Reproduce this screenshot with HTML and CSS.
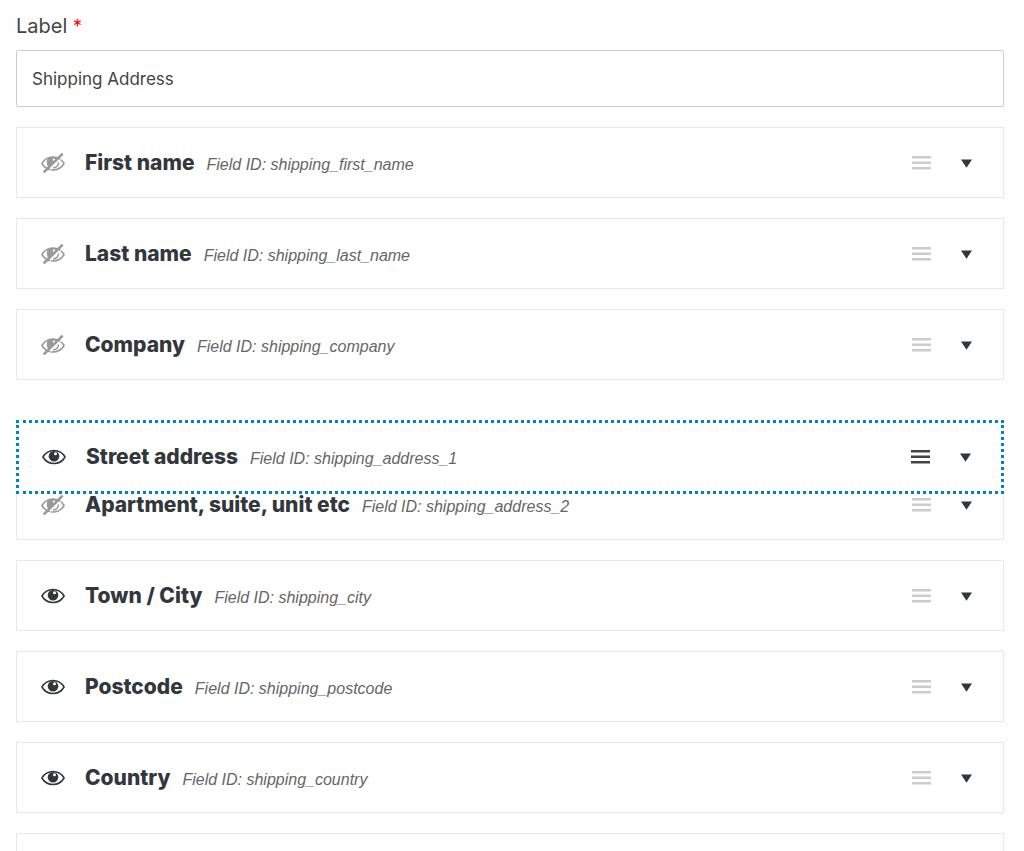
FILE: index.html
```html
<!DOCTYPE html>
<html lang="en">
<head>
<meta charset="utf-8">
<title>Shipping Address</title>
<link rel="stylesheet" href="styles.css">
</head>
<body>
<svg class="sprite" aria-hidden="true">
  <symbol id="eye" viewBox="0 0 24 16">
    <path d="M0.900 8C3.500 3.600 7.500 1.500 12 1.500S20.500 3.600 23.100 8C20.500 12.400 16.500 14.500 12 14.500S3.500 12.400 0.900 8Z" fill="none" stroke="currentColor" stroke-width="1.500" stroke-linejoin="round"/>
    <circle cx="12" cy="7.300" r="5.300" fill="currentColor"/>
    <circle cx="13.500" cy="4.800" r="1.500" fill="#fff"/>
  </symbol>
  <symbol id="eye-off" viewBox="0 0 24 20">
    <path d="M0.900 10.500C3.500 6.100 7.500 4 12 4S20.500 6.100 23.100 10.500C20.500 14.900 16.500 17 12 17S3.500 14.900 0.900 10.500Z" fill="none" stroke="currentColor" stroke-width="1.500" stroke-linejoin="round"/>
    <path d="M6.800 5.500 12 3.800 18 4.700 8 15C5.400 12.500 5.200 8 6.800 5.500Z" fill="currentColor"/>
    <circle cx="13" cy="6.800" r="1.200" fill="#fff"/>
    <path d="M6 20.500 23 3.200" stroke="#fff" stroke-width="1"/>
    <path d="M12 15C15.300 14.700 17.300 12.500 17.500 9.500" fill="none" stroke="currentColor" stroke-width="1.500"/>
    <path d="M3.500 18.700 20.900 1.400" stroke="currentColor" stroke-width="2.600" stroke-linecap="round"/>
  </symbol>
  <symbol id="bars" viewBox="0 0 19 14">
    <path d="M0 1.300H19M0 6.800H19M0 12.300H19" stroke="currentColor" stroke-width="2.500"/>
  </symbol>
  <symbol id="down" viewBox="0 0 11 10">
    <path d="M0 1.500H11L5.500 9.700Z" fill="currentColor"/>
  </symbol>
</svg>
<main class="settings">
  <label class="label" for="field-label">Label <span class="required">*</span></label>
  <input class="text-input" id="field-label" type="text" value="Shipping Address" required>
  <ul class="fields">
    <li class="card">
      <button class="icon-button visibility is-off" type="button" aria-label="Show First name"><svg class="icon-eye-off"><use href="#eye-off"/></svg></button>
      <div class="text"><strong class="name">First name</strong><em class="id">Field ID: shipping_first_name</em></div>
      <button class="icon-button handle" type="button" aria-label="Move"><svg class="icon-bars"><use href="#bars"/></svg></button>
      <button class="icon-button toggle" type="button" aria-label="Expand"><svg class="icon-down"><use href="#down"/></svg></button>
    </li>
    <li class="card">
      <button class="icon-button visibility is-off" type="button" aria-label="Show Last name"><svg class="icon-eye-off"><use href="#eye-off"/></svg></button>
      <div class="text"><strong class="name">Last name</strong><em class="id">Field ID: shipping_last_name</em></div>
      <button class="icon-button handle" type="button" aria-label="Move"><svg class="icon-bars"><use href="#bars"/></svg></button>
      <button class="icon-button toggle" type="button" aria-label="Expand"><svg class="icon-down"><use href="#down"/></svg></button>
    </li>
    <li class="card">
      <button class="icon-button visibility is-off" type="button" aria-label="Show Company"><svg class="icon-eye-off"><use href="#eye-off"/></svg></button>
      <div class="text"><strong class="name">Company</strong><em class="id">Field ID: shipping_company</em></div>
      <button class="icon-button handle" type="button" aria-label="Move"><svg class="icon-bars"><use href="#bars"/></svg></button>
      <button class="icon-button toggle" type="button" aria-label="Expand"><svg class="icon-down"><use href="#down"/></svg></button>
    </li>
    <li class="slot">
      <div class="card is-dragging">
        <button class="icon-button visibility" type="button" aria-label="Hide Street address"><svg class="icon-eye"><use href="#eye"/></svg></button>
        <div class="text"><strong class="name">Street address</strong><em class="id">Field ID: shipping_address_1</em></div>
        <button class="icon-button handle" type="button" aria-label="Move"><svg class="icon-bars"><use href="#bars"/></svg></button>
        <button class="icon-button toggle" type="button" aria-label="Expand"><svg class="icon-down"><use href="#down"/></svg></button>
      </div>
    </li>
    <li class="card">
      <button class="icon-button visibility is-off" type="button" aria-label="Show Apartment"><svg class="icon-eye-off"><use href="#eye-off"/></svg></button>
      <div class="text"><strong class="name">Apartment, suite, unit etc</strong><em class="id">Field ID: shipping_address_2</em></div>
      <button class="icon-button handle" type="button" aria-label="Move"><svg class="icon-bars"><use href="#bars"/></svg></button>
      <button class="icon-button toggle" type="button" aria-label="Expand"><svg class="icon-down"><use href="#down"/></svg></button>
    </li>
    <li class="card">
      <button class="icon-button visibility" type="button" aria-label="Hide Town / City"><svg class="icon-eye"><use href="#eye"/></svg></button>
      <div class="text"><strong class="name">Town / City</strong><em class="id">Field ID: shipping_city</em></div>
      <button class="icon-button handle" type="button" aria-label="Move"><svg class="icon-bars"><use href="#bars"/></svg></button>
      <button class="icon-button toggle" type="button" aria-label="Expand"><svg class="icon-down"><use href="#down"/></svg></button>
    </li>
    <li class="card">
      <button class="icon-button visibility" type="button" aria-label="Hide Postcode"><svg class="icon-eye"><use href="#eye"/></svg></button>
      <div class="text"><strong class="name">Postcode</strong><em class="id">Field ID: shipping_postcode</em></div>
      <button class="icon-button handle" type="button" aria-label="Move"><svg class="icon-bars"><use href="#bars"/></svg></button>
      <button class="icon-button toggle" type="button" aria-label="Expand"><svg class="icon-down"><use href="#down"/></svg></button>
    </li>
    <li class="card">
      <button class="icon-button visibility" type="button" aria-label="Hide Country"><svg class="icon-eye"><use href="#eye"/></svg></button>
      <div class="text"><strong class="name">Country</strong><em class="id">Field ID: shipping_country</em></div>
      <button class="icon-button handle" type="button" aria-label="Move"><svg class="icon-bars"><use href="#bars"/></svg></button>
      <button class="icon-button toggle" type="button" aria-label="Expand"><svg class="icon-down"><use href="#down"/></svg></button>
    </li>
    <li class="card"></li>
  </ul>
</main>
</body>
</html>
```

FILE: styles.css
```css
* {
  box-sizing: border-box;
}

body {
  margin: 0;
  background: #fefefe;
  color: #32373c;
  font-family: Inter, "Liberation Sans", sans-serif;
}

.sprite {
  position: absolute;
  width: 0;
  height: 0;
}

.settings {
  height: 100vh;
  overflow: hidden;
  padding: 12px 20px 0 16px;
}

.label {
  display: block;
  margin-bottom: 10px;
  color: #444;
  font-size: 20px;
  line-height: 28px;
}

.required {
  color: #f00;
  font-size: 18px;
  line-height: 20px;
}

.text-input {
  display: block;
  width: 100%;
  height: 57px;
  padding: 0 15px;
  border: 1px solid #ccc;
  border-radius: 2px;
  background: #fff;
  color: #444;
  font: inherit;
  font-size: 17px;
}

.fields {
  display: flex;
  flex-direction: column;
  gap: 20px;
  margin: 20px 0 0;
  padding: 0;
  list-style: none;
}

.card {
  display: flex;
  flex-shrink: 0;
  align-items: center;
  min-height: 71px;
  padding: 0 24px;
  border: 1px solid #e8e8e8;
  background: #fff;
}

.slot {
  position: relative;
  flex-shrink: 0;
  height: 49px;
}

.is-dragging {
  position: absolute;
  top: 20px;
  right: 0;
  left: 0;
  border: 3px dotted #0085ba;
  min-height: 74px;
  padding: 0 23px;
}

.text {
  display: flex;
  flex: 1;
  align-items: baseline;
  gap: 12px;
  white-space: nowrap;
}

.name {
  font-size: 21px;
  font-weight: 800;
  line-height: 28px;
}

.id {
  color: #666;
  font-family: "Liberation Sans", Arial, sans-serif;
  font-size: 16px;
  line-height: 24px;
}

.icon-button {
  display: flex;
  align-items: center;
  justify-content: center;
  padding: 0;
  border: 0;
  background: none;
  color: inherit;
  cursor: pointer;
}

.visibility {
  width: 24px;
  margin-right: 20px;
}

.is-off {
  color: #999;
}

.handle {
  width: 19px;
  margin-right: 30px;
  color: #ccc;
  cursor: move;
}

.is-dragging .handle {
  color: #444;
}

.toggle {
  width: 11px;
  margin-right: 7px;
}

.icon-eye {
  width: 24px;
  height: 16px;
}

.icon-eye-off {
  width: 24px;
  height: 20px;
}

.icon-bars {
  width: 19px;
  height: 14px;
}

.icon-down {
  width: 11px;
  height: 10px;
}
```
